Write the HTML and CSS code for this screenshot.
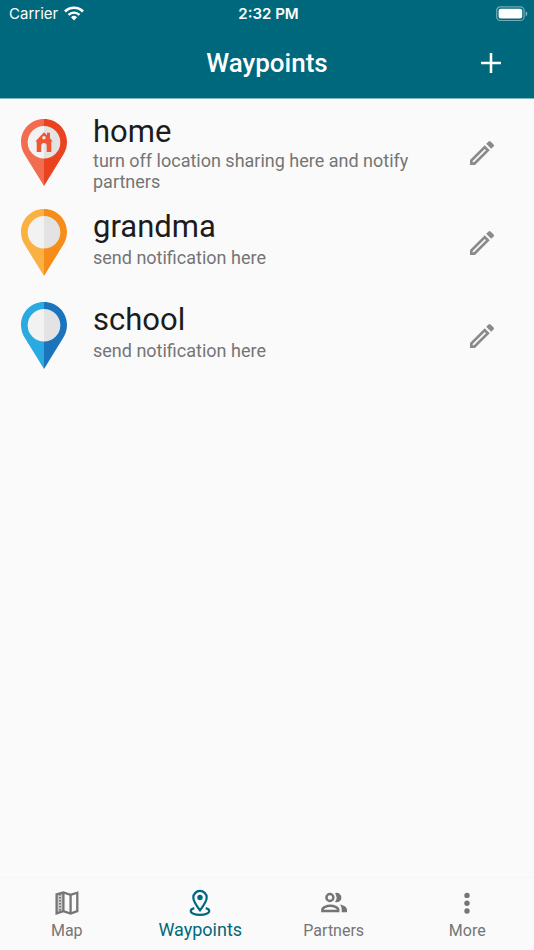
FILE: index.html
```html
<!DOCTYPE html>
<html lang="en">
<head>
    <meta charset="UTF-8">
    <meta name="viewport" content="width=device-width, initial-scale=1.0">
    <title>Waypoints</title>
    <link rel="stylesheet" href="styles.css">
</head>
<body>
    <header class="header">
        <div class="status-bar">
            <div class="carrier">
                <span>Carrier</span>
                <svg class="wifi" viewBox="0 0 20 15" aria-hidden="true">
                    <path d="M1 5.500a12.700 12.700 0 0 1 18 0" fill="none" stroke="#fff" stroke-width="2.700"/>
                    <path d="M4.500 8.900a7.900 7.900 0 0 1 11 0" fill="none" stroke="#fff" stroke-width="2.400"/>
                    <path d="M10 14.400 7 11.300a4.300 4.300 0 0 1 6 0z" fill="#fff"/>
                </svg>
            </div>
            <span class="time">2:32 PM</span>
            <svg class="battery" viewBox="0 0 32 16" aria-hidden="true">
                <rect x="0.7" y="0.9" width="27.4" height="13.6" rx="3.6" fill="none" stroke="#fff" stroke-opacity="0.45" stroke-width="1.2"/>
                <rect x="2.6" y="2.8" width="23.6" height="9.8" rx="2" fill="#fff"/>
                <path d="M29.7 5.2a2.7 2.7 0 0 1 0 5z" fill="#fff" fill-opacity="0.5"/>
            </svg>
        </div>
        <div class="app-bar">
            <h1>Waypoints</h1>
            <button class="icon-button" type="button" aria-label="Add waypoint">
                <svg class="icon-add" viewBox="0 0 24 24"><path d="M19 12.9h-6.1V19h-1.8v-6.1H5v-1.8h6.1V5h1.8v6.1H19z"/></svg>
            </button>
        </div>
    </header>

    <main class="content">
        <ul class="waypoints">
            <li class="waypoint three-line">
                <svg class="pin pin-red" viewBox="0 0 46 67" aria-hidden="true">
                    <path class="pin-left" d="M23 0C10 0 0 10.3 0 23c0 5 1.4 9.2 4.2 13.5L23 67z"/>
                    <path class="pin-right" d="M23 0c13 0 23 10.3 23 23 0 5-1.4 9.2-4.2 13.5L23 67z"/>
                    <path class="disc-left" d="M23 7a16.300 16.300 0 0 0 0 32.600z"/>
                    <path class="disc-right" d="M23 7a16.300 16.300 0 0 1 0 32.600z"/>
                    <path class="house" fill-rule="evenodd" d="M23 13.3 26 16.3v-2.5h3v5.5l2.7 3.2h-1.4V33h-4.6v-6.2a2.7 2.7 0 0 0-5.4 0V33h-4.6V22.5h-1.400zM23 17a1.800 1.800 0 1 0 0 3.600 1.800 1.800 0 0 0 0-3.600z"/>
                </svg>
                <div class="waypoint-text">
                    <h2>home</h2>
                    <p>turn off location sharing here and notify partners</p>
                </div>
                <button class="icon-button" type="button" aria-label="Edit home">
                    <svg class="icon-edit" viewBox="0 0 24 24"><path fill-rule="evenodd" d="M3 17.250V21h3.750L17.810 9.940l-3.750-3.750zM5.920 19H5v-.920l9.060-9.060.920.920zM20.710 5.630l-2.340-2.340a1 1 0 0 0-1.410 0l-1.830 1.830 3.750 3.750 1.830-1.830a1 1 0 0 0 0-1.410z"/></svg>
                </button>
            </li>
            <li class="waypoint">
                <svg class="pin pin-orange" viewBox="0 0 46 67" aria-hidden="true">
                    <path class="pin-left" d="M23 0C10 0 0 10.3 0 23c0 5 1.4 9.2 4.2 13.5L23 67z"/>
                    <path class="pin-right" d="M23 0c13 0 23 10.3 23 23 0 5-1.4 9.2-4.2 13.5L23 67z"/>
                    <path class="disc-left" d="M23 7a16.300 16.300 0 0 0 0 32.600z"/>
                    <path class="disc-right" d="M23 7a16.300 16.300 0 0 1 0 32.600z"/>
                </svg>
                <div class="waypoint-text">
                    <h2>grandma</h2>
                    <p>send notification here</p>
                </div>
                <button class="icon-button" type="button" aria-label="Edit grandma">
                    <svg class="icon-edit" viewBox="0 0 24 24"><path fill-rule="evenodd" d="M3 17.250V21h3.750L17.810 9.940l-3.750-3.750zM5.920 19H5v-.920l9.060-9.060.920.920zM20.710 5.630l-2.340-2.340a1 1 0 0 0-1.410 0l-1.830 1.830 3.750 3.750 1.830-1.830a1 1 0 0 0 0-1.410z"/></svg>
                </button>
            </li>
            <li class="waypoint">
                <svg class="pin pin-blue" viewBox="0 0 46 67" aria-hidden="true">
                    <path class="pin-left" d="M23 0C10 0 0 10.3 0 23c0 5 1.4 9.2 4.2 13.5L23 67z"/>
                    <path class="pin-right" d="M23 0c13 0 23 10.3 23 23 0 5-1.4 9.2-4.2 13.5L23 67z"/>
                    <path class="disc-left" d="M23 7a16.300 16.300 0 0 0 0 32.600z"/>
                    <path class="disc-right" d="M23 7a16.300 16.300 0 0 1 0 32.600z"/>
                </svg>
                <div class="waypoint-text">
                    <h2>school</h2>
                    <p>send notification here</p>
                </div>
                <button class="icon-button" type="button" aria-label="Edit school">
                    <svg class="icon-edit" viewBox="0 0 24 24"><path fill-rule="evenodd" d="M3 17.250V21h3.750L17.810 9.940l-3.750-3.750zM5.920 19H5v-.920l9.060-9.060.920.920zM20.710 5.630l-2.340-2.340a1 1 0 0 0-1.410 0l-1.830 1.830 3.750 3.750 1.830-1.830a1 1 0 0 0 0-1.410z"/></svg>
                </button>
            </li>
        </ul>
    </main>

    <nav class="bottom-nav">
        <a class="nav-item" href="#map">
            <svg viewBox="0 0 28 28" aria-hidden="true">
                <path d="M3.600 5.400 10.400 3.500v18.700l-6.800 2.200z" fill="currentColor" fill-opacity="0.35"/>
                <path d="M3.600 5.400 10.400 3.500l7.200 2.300 6.700-2.100v18.500l-6.700 2.400-7.200-2.400-6.800 2.200z" fill="none" stroke="currentColor" stroke-width="2.300"/>
                <path d="M10.400 3.500v18.700M17.600 5.800v18.800" stroke="currentColor" stroke-width="2.300"/>
                <path d="M7.100 5v18" stroke="currentColor" stroke-width="2" stroke-dasharray="1.500 1.500"/>
            </svg>
            <span>Map</span>
        </a>
        <a class="nav-item active" href="#waypoints">
            <svg viewBox="0 0 28 28" aria-hidden="true">
                <path d="M14 21.300C9.800 16 7.300 12.400 7.300 8.600a6.700 6.700 0 0 1 13.400 0c0 3.800-2.500 7.400-6.700 12.700z" fill="none" stroke="currentColor" stroke-width="2.200"/>
                <circle cx="14" cy="8.5" r="2.700" fill="currentColor"/>
                <path d="M8.300 19.100c-2.200.600-3.500 1.600-3.500 2.800 0 2.200 4 3.900 9.200 3.900s9.200-1.700 9.200-3.900c0-1.200-1.300-2.200-3.500-2.800" fill="none" stroke="currentColor" stroke-width="2.200"/>
            </svg>
            <span>Waypoints</span>
        </a>
        <a class="nav-item" href="#partners">
            <svg viewBox="0 0 28 28" aria-hidden="true">
                <circle cx="9.900" cy="8.500" r="3.500" fill="none" stroke="currentColor" stroke-width="2.500"/>
                <path d="M2.400 22v-1.200c0-2.500 4.600-4 7.900-4s7.900 1.500 7.900 4V22z" fill="none" stroke="currentColor" stroke-width="2.500"/>
                <path d="M15 4.200a4.700 4.700 0 1 1 0 8.700 7.300 7.300 0 0 0 0-8.700zM19.800 15.600c3.900.600 7.200 2.300 7.200 5.200v2.500h-5.300v-2.500c0-2-.700-3.900-1.900-5.200z" fill="currentColor"/>
            </svg>
            <span>Partners</span>
        </a>
        <a class="nav-item" href="#more">
            <svg viewBox="0 0 28 28" aria-hidden="true">
                <circle cx="14" cy="6.400" r="2.700" fill="currentColor"/>
                <circle cx="14" cy="14.200" r="2.700" fill="currentColor"/>
                <circle cx="14" cy="22" r="2.700" fill="currentColor"/>
            </svg>
            <span>More</span>
        </a>
    </nav>
</body>
</html>
```
FILE: styles.css
```css
* {
    margin: 0;
    padding: 0;
    box-sizing: border-box;
}

body {
    font-family: Roboto, sans-serif;
    background: #fafafa;
    color: #1c1c1c;
    min-height: 100vh;
    display: flex;
    flex-direction: column;
}

.header {
    background: #00687d;
    color: white;
    border-bottom: 1px solid #80b4be;
}

.status-bar {
    display: grid;
    grid-template-columns: 1fr auto 1fr;
    align-items: center;
    height: 27px;
    padding: 0 6px 0 9px;
    font-family: Inter, sans-serif;
    font-size: 15px;
}

.carrier {
    display: flex;
    align-items: center;
    gap: 6px;
}

.wifi {
    width: 20px;
    height: 15px;
}

.time {
    font-weight: 600;
}

.battery {
    width: 32px;
    height: 16px;
    justify-self: end;
}

.app-bar {
    display: grid;
    grid-template-columns: 1fr auto 1fr;
    align-items: center;
    height: 71px;
    padding: 0 19px;
}

.app-bar h1 {
    grid-column: 2;
    font-size: 26px;
    font-weight: 500;
}

.icon-button {
    display: flex;
    align-items: center;
    justify-content: center;
    width: 48px;
    height: 48px;
    border: none;
    background: none;
    color: inherit;
    cursor: pointer;
}

.icon-button svg {
    fill: currentColor;
}

.app-bar .icon-button {
    justify-self: end;
}

.icon-add {
    width: 34px;
    height: 34px;
}

.content {
    flex: 1;
    padding-top: 10px;
}

.waypoints {
    list-style: none;
}

.waypoint {
    display: flex;
    align-items: center;
    min-height: 93px;
    padding: 4px 28px 4px 21px;
}

.waypoint.three-line {
    min-height: 87px;
}

.pin {
    flex: none;
    width: 46px;
    height: 67px;
    margin-right: 26px;
}

.pin-red .pin-left { fill: #f26c4f; }
.pin-red .pin-right { fill: #ea4320; }
.pin-orange .pin-left { fill: #fbb042; }
.pin-orange .pin-right { fill: #f68d1a; }
.pin-blue .pin-left { fill: #29abe2; }
.pin-blue .pin-right { fill: #1c75bc; }

.disc-left { fill: #f2f2f2; }
.disc-right { fill: #e3e3e3; }
.house { fill: #ee5636; }

.waypoint-text {
    flex: 1;
    padding-bottom: 8px;
}

.waypoint-text h2 {
    font-size: 31px;
    font-weight: 400;
    line-height: 36px;
    margin-bottom: 2px;
}

.waypoint-text p {
    max-width: 340px;
    font-size: 18px;
    line-height: 21px;
    color: #757575;
}

.three-line .waypoint-text {
    padding-bottom: 0;
}

.three-line h2 {
    margin-bottom: 0;
}

.waypoint .icon-button {
    color: #8a8a8a;
}

.icon-edit {
    width: 32px;
    height: 32px;
}

.bottom-nav {
    display: grid;
    grid-template-columns: repeat(4, 1fr);
    height: 73px;
    border-top: 1px solid #f6f6f6;
}

.nav-item {
    display: flex;
    flex-direction: column;
    align-items: center;
    padding-top: 11px;
    font-size: 16px;
    line-height: 28px;
    color: #757575;
    text-decoration: none;
}

.nav-item svg {
    width: 28px;
    height: 28px;
}

.nav-item.active {
    font-size: 18px;
    line-height: 26px;
    color: #00687d;
}
```
